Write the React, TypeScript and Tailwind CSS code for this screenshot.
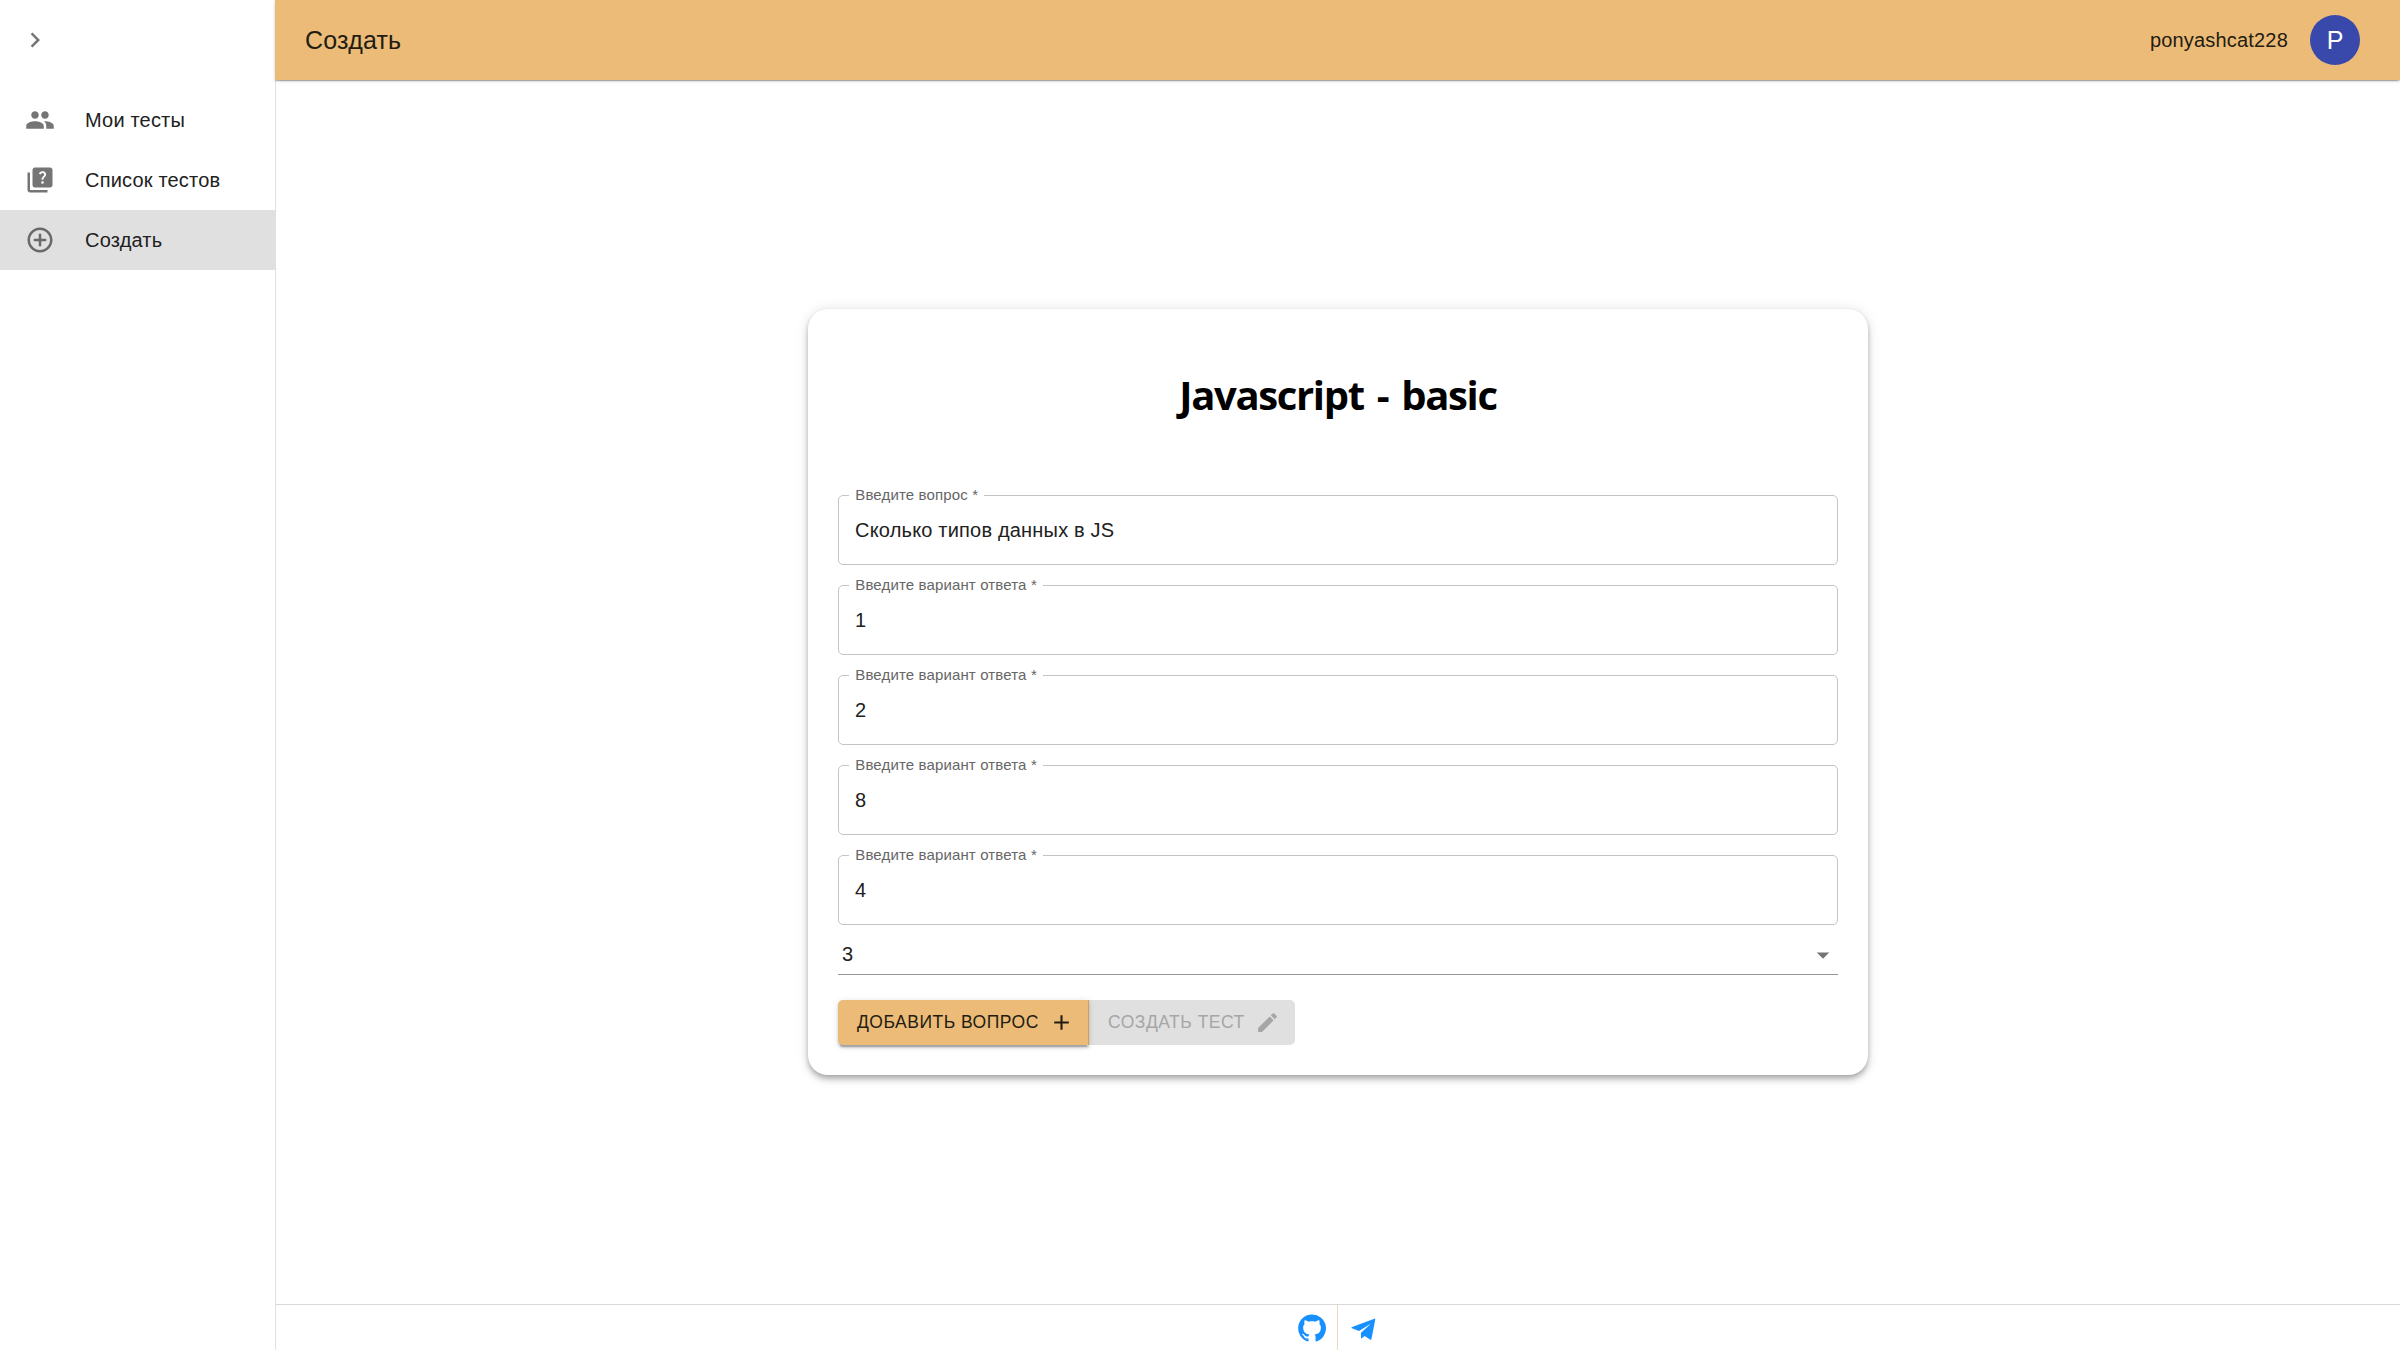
import React from "react";

type IconProps = { d: string; className?: string };
const Icon = ({ d, className = "" }: IconProps) => (
  <svg viewBox="0 0 24 24" fill="currentColor" className={`shrink-0 ${className}`}>
    <path d={d} />
  </svg>
);

const icons = {
  chevron: "M10 6 8.59 7.41 13.17 12l-4.58 4.59L10 18l6-6z",
  people:
    "M16 11c1.66 0 2.99-1.34 2.99-3S17.66 5 16 5c-1.66 0-3 1.34-3 3s1.34 3 3 3zm-8 0c1.66 0 2.99-1.34 2.99-3S9.66 5 8 5C6.34 5 5 6.34 5 8s1.34 3 3 3zm0 2c-2.33 0-7 1.17-7 3.5V19h14v-2.5c0-2.33-4.67-3.5-7-3.5zm8 0c-.29 0-.62.02-.97.05 1.16.84 1.97 1.97 1.97 3.45V19h6v-2.5c0-2.33-4.67-3.5-7-3.5z",
  quiz: "M4 6H2v14c0 1.1.9 2 2 2h14v-2H4V6zm16-4H8c-1.1 0-2 .9-2 2v12c0 1.1.9 2 2 2h12c1.1 0 2-.9 2-2V4c0-1.1-.9-2-2-2zm-5.99 13c-.59 0-1.05-.47-1.05-1.05 0-.59.47-1.04 1.05-1.04.59 0 1.04.45 1.04 1.04-.01.58-.45 1.05-1.04 1.05zm2.5-6.17c-.63.93-1.23 1.21-1.56 1.81-.13.24-.18.4-.18 1.18h-1.52c0-.41-.06-1.08.26-1.65.41-.73 1.18-1.16 1.63-1.8.48-.68.21-1.94-1.14-1.94-.88 0-1.32.67-1.5 1.23l-1.37-.57C11.51 5.96 12.52 5 13.99 5c1.23 0 2.08.56 2.51 1.26.37.6.58 1.73.01 2.57z",
  addCircle:
    "M13 7h-2v4H7v2h4v4h2v-4h4v-2h-4V7zm-1-5C6.48 2 2 6.48 2 12s4.48 10 10 10 10-4.48 10-10S17.52 2 12 2zm0 18c-4.41 0-8-3.59-8-8s3.59-8 8-8 8 3.59 8 8-3.59 8-8 8z",
  add: "M19 13h-6v6h-2v-6H5v-2h6V5h2v6h6v2z",
  edit: "M3 17.25V21h3.75L17.81 9.94l-3.75-3.75L3 17.25zM20.71 7.04c.39-.39.39-1.02 0-1.41l-2.34-2.34a.9959.9959 0 0 0-1.41 0l-1.83 1.83 3.75 3.75 1.83-1.83z",
  dropDown: "M7 10l5 5 5-5z",
  github:
    "M12 1.27a11 11 0 00-3.48 21.46c.55.09.73-.28.73-.55v-1.84c-3.03.64-3.67-1.46-3.67-1.46-.55-1.29-1.28-1.65-1.28-1.65-.92-.65.1-.65.1-.65 1.1 0 1.73 1.1 1.73 1.1.92 1.65 2.57 1.2 3.21.92a2 2 0 01.64-1.47c-2.47-.27-5.04-1.19-5.04-5.5 0-1.1.46-2.1 1.2-2.84a3.76 3.76 0 010-2.93s.91-.28 3.11 1.1c1.8-.49 3.7-.49 5.5 0 2.1-1.38 3.02-1.1 3.02-1.1a3.76 3.76 0 01.1 2.93c.83.74 1.2 1.74 1.2 2.94 0 4.21-2.57 5.13-5.04 5.4.45.37.82.92.82 2.02v3.03c0 .27.1.64.73.55A11 11 0 0012 1.27",
  telegram:
    "M3.200 12.100c-.6-.3-.5-.8.1-1L21.100 4.500c.5-.2.8.1.7.6L18.800 20.600c-.2.7-.6.9-1.200.6l-4.300-2.900-2.300 1.800c-.3.3-.6.2-.6-.3v-4l8.100-7.500-9.700 6z",
};

const navigation = [
  { label: "Мои тесты", icon: icons.people, active: false },
  { label: "Список тестов", icon: icons.quiz, active: false },
  { label: "Создать", icon: icons.addCircle, active: true },
];

const fields = [
  { label: "Введите вопрос", value: "Сколько типов данных в JS" },
  { label: "Введите вариант ответа", value: "1" },
  { label: "Введите вариант ответа", value: "2" },
  { label: "Введите вариант ответа", value: "8" },
  { label: "Введите вариант ответа", value: "4" },
];

const Sidebar = () => (
  <aside className="flex w-[276px] shrink-0 flex-col border-r border-[#e0e0e0]">
    <div className="flex h-20 items-center pl-5 text-[#757575]">
      <Icon d={icons.chevron} className="size-[30px]" />
    </div>
    <nav className="pt-2.5">
      {navigation.map((item) => (
        <a
          key={item.label}
          className={`flex h-15 items-center pl-[25px] ${item.active ? "bg-[#e0e0e0]" : ""}`}
        >
          <Icon
            d={item.icon}
            className={`size-[30px] ${item.active ? "text-[#696969]" : "text-[#757575]"}`}
          />
          <span className="ml-[30px] text-[20px] leading-[30px] tracking-[0.00938em]">{item.label}</span>
        </a>
      ))}
    </nav>
  </aside>
);

const Field = ({ label, value }: { label: string; value: string }) => (
  <div className="relative h-[70px]">
    <fieldset className="absolute inset-x-0 -top-[7px] bottom-0 rounded-[5px] border border-[#c4c4c4] pl-2.5">
      <legend className="h-[14px] px-[6.25px] text-[15px] leading-[14px] tracking-[0.00938em] whitespace-nowrap text-[#666666]">
        {label} *
      </legend>
    </fieldset>
    <div className="flex h-full items-center pl-[17px] text-[20px] tracking-[0.00938em]">{value}</div>
  </div>
);

export default function App() {
  return (
    <div className="flex h-[1350px] w-[2400px] overflow-hidden bg-white font-['Liberation_Sans',sans-serif] text-[#212121]">
      <Sidebar />
      <div className="flex min-w-0 flex-1 flex-col">
        <header className="-ml-px flex h-20 shrink-0 items-center bg-[#ebbb77] pr-10 pl-[30px] text-[#231c12] shadow-[0_2.5px_1.25px_-1.25px_rgba(0,0,0,0.2),0_1.25px_1.25px_0_rgba(0,0,0,0.14),0_1.25px_3.75px_0_rgba(0,0,0,0.12)]">
          <h1 className="flex-1 text-[25px] leading-10 tracking-[0.0075em]">Создать</h1>
          <span className="text-[20px] tracking-[0.00938em]">ponyashcat228</span>
          <div className="ml-[22px] flex size-[50px] items-center justify-center rounded-full bg-[#3949ab] pt-px text-[25px] text-white">
            P
          </div>
        </header>
        <main className="flex flex-1 items-center justify-center">
          <section className="flex h-[766px] w-[1060px] flex-col rounded-[20px] bg-white px-[30px] shadow-[0_2.5px_5px_-1.25px_rgba(0,0,0,0.2),0_5px_6.25px_0_rgba(0,0,0,0.14),0_1.25px_12.5px_0_rgba(0,0,0,0.12)]">
            <h2 className="mt-[59px] mb-[1px] text-center font-['Open_Sans',sans-serif] text-[40px] leading-[54px] font-bold tracking-[-1.35px] text-black [word-spacing:4px]">
              Javascript - basic
            </h2>
            <div className="mt-[72px] flex flex-col gap-5">
              {fields.map((field, i) => (
                <Field key={i} {...field} />
              ))}
            </div>
            <div className="mt-2.5 flex h-10 items-center justify-between border-b border-[#949494] pl-1 text-[20px]">
              <span className="pb-0.5">3</span>
              <Icon d={icons.dropDown} className="size-[30px] text-[#757575]" />
            </div>
            <div className="mt-[25px] flex h-[45px] text-[17.5px] tracking-[0.02857em]">
              <button className="relative flex w-[251px] items-center justify-between rounded-l-[5px] border-r border-[#d1a15c] bg-[#ebbb77] pr-[14px] pl-[19px] whitespace-nowrap text-[#231c12] shadow-[0_3.75px_1.25px_-2.5px_rgba(0,0,0,0.2),0_2.5px_2.5px_0_rgba(0,0,0,0.14),0_1.25px_6.25px_0_rgba(0,0,0,0.12)]">
                ДОБАВИТЬ ВОПРОС
                <Icon d={icons.add} className="size-[25px]" />
              </button>
              <button className="flex w-[206px] items-center justify-between rounded-r-[5px] bg-[#e0e0e0] pr-[15px] pl-[19px] whitespace-nowrap text-[#a6a6a6]">
                СОЗДАТЬ ТЕСТ
                <Icon d={icons.edit} className="size-[25px]" />
              </button>
            </div>
          </section>
        </main>
        <footer className="-ml-px flex h-[46px] shrink-0 justify-center border-t border-[#d9d9d9] text-[#1890ff]">
          <div className="flex items-center border-r border-[#ebd9bd] px-2.5">
            <Icon d={icons.github} className="size-[30px]" />
          </div>
          <div className="flex items-center px-2.5">
            <Icon d={icons.telegram} className="size-[30px]" />
          </div>
        </footer>
      </div>
    </div>
  );
}
